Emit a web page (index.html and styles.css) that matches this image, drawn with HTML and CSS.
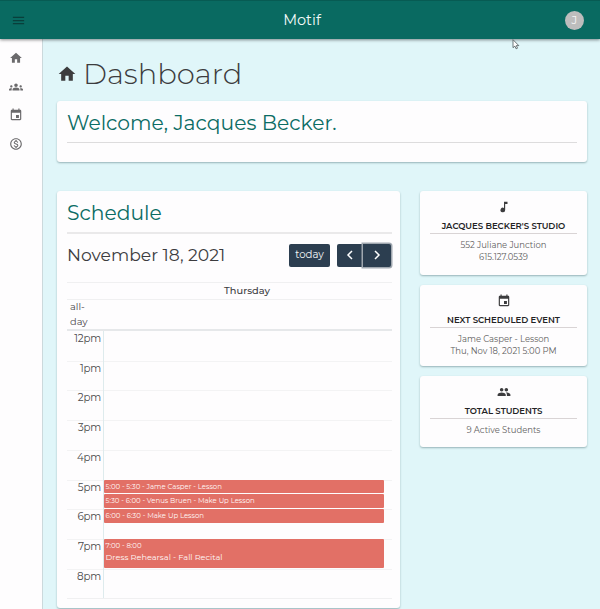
FILE: index.html
```html
<!DOCTYPE html>
<html lang="en">
<head>
<meta charset="utf-8">
<title>Motif</title>
<link rel="stylesheet" href="styles.css">
</head>
<body>
<svg class="sprites" aria-hidden="true">
  <symbol id="home" viewBox="0 0 24 24"><path d="M10 20v-6h4v6h5v-8h3L12 3 2 12h3v8z"/></symbol>
  <symbol id="groups" viewBox="0 0 24 24"><path d="M12 12.75c1.63 0 3.07.39 4.24.9 1.08.48 1.76 1.56 1.76 2.73V18H6v-1.61c0-1.18.68-2.26 1.76-2.73 1.17-.52 2.61-.91 4.24-.91zM4 13c1.1 0 2-.9 2-2s-.9-2-2-2-2 .9-2 2 .9 2 2 2zm1.13 1.1C4.76 14.04 4.39 14 4 14c-.99 0-1.93.21-2.78.58C.48 14.9 0 15.62 0 16.43V18h4.5v-1.61c0-.83.23-1.61.63-2.29zM20 13c1.1 0 2-.9 2-2s-.9-2-2-2-2 .9-2 2 .9 2 2 2zm4 3.43c0-.81-.48-1.53-1.22-1.85C21.93 14.21 20.99 14 20 14c-.39 0-.76.04-1.13.1.4.68.63 1.46.63 2.29V18H24v-1.57zM12 6c1.66 0 3 1.34 3 3s-1.34 3-3 3-3-1.34-3-3 1.34-3 3-3z"/></symbol>
  <symbol id="event" viewBox="0 0 24 24"><path d="M17 12h-5v5h5v-5zM16 1v2H8V1H6v2H5c-1.11 0-1.99.9-1.99 2L3 19c0 1.1.89 2 2 2h14c1.1 0 2-.9 2-2V5c0-1.1-.9-2-2-2h-1V1h-2zm3 18H5V8h14v11z"/></symbol>
  <symbol id="money" viewBox="0 0 24 24"><path d="M12 2C6.48 2 2 6.48 2 12s4.480 10 10 10 10-4.480 10-10S17.520 2 12 2zm0 18c-4.410 0-8-3.590-8-8s3.590-8 8-8 8 3.590 8 8-3.590 8-8 8zm.310-8.860c-1.770-.450-2.340-.940-2.340-1.670 0-.840.790-1.430 2.100-1.430 1.380 0 1.900.660 1.940 1.640h1.710c-.050-1.340-.870-2.570-2.490-2.970V5H10.900v1.690c-1.510.320-2.720 1.300-2.720 2.810 0 1.790 1.490 2.690 3.660 3.210 1.950.460 2.340 1.150 2.340 1.870 0 .530-.390 1.390-2.100 1.390-1.600 0-2.230-.720-2.320-1.640H8.040c.100 1.700 1.360 2.660 2.860 2.970V19h2.340v-1.670c1.520-.290 2.720-1.160 2.730-2.770-.010-2.200-1.900-2.960-3.660-3.420z"/></symbol>
  <symbol id="note" viewBox="0 0 24 24"><path d="M12 3v10.550A4 4 0 1 0 14 17V7h4V3h-6z"/></symbol>
  <symbol id="people" viewBox="0 0 24 24"><path d="M16 11c1.660 0 2.990-1.340 2.990-3S17.660 5 16 5s-3 1.340-3 3 1.340 3 3 3zm-8 0c1.660 0 2.990-1.340 2.990-3S9.660 5 8 5 5 6.340 5 8s1.340 3 3 3zm0 2c-2.330 0-7 1.170-7 3.500V19h14v-2.500c0-2.330-4.670-3.500-7-3.500zm8 0c-.290 0-.620.020-.970.050 1.160.840 1.970 1.970 1.970 3.450V19h6v-2.500c0-2.330-4.670-3.500-7-3.500z"/></symbol>
</svg>

<header class="topbar">
  <svg class="menu" viewBox="0 0 24 24"><path d="M3 18h18v-2H3v2zm0-5h18v-2H3v2zm0-7v2h18V6H3z"/></svg>
  <div class="brand">Motif</div>
  <div class="avatar">J</div>
</header>

<div class="shell">
  <nav class="sidebar">
    <svg><use href="#home"/></svg>
    <svg><use href="#groups"/></svg>
    <svg><use href="#event"/></svg>
    <svg><use href="#money"/></svg>
  </nav>

  <main class="content">
    <h1 class="page-title"><svg><use href="#home"/></svg>Dashboard</h1>

    <section class="card welcome">
      <h2 class="heading">Welcome, Jacques Becker.</h2>
    </section>

    <div class="columns">
      <section class="card schedule">
        <h2 class="heading">Schedule</h2>
        <div class="toolbar">
          <div class="date">November 18, 2021</div>
          <button class="btn today">today</button>
          <div class="btn-group">
            <button class="btn"><svg viewBox="0 0 10 12"><path d="M7 2 3 6l4 4"/></svg></button>
            <button class="btn focused"><svg viewBox="0 0 10 12"><path d="m3 2 4 4-4 4"/></svg></button>
          </div>
        </div>
        <div class="calendar">
          <div class="day-name">Thursday</div>
          <div class="all-day">all-<br>day</div>
          <div class="slots">
            <div class="hour h0">12pm</div>
            <div class="hour h1">1pm</div>
            <div class="hour h2">2pm</div>
            <div class="hour h3">3pm</div>
            <div class="hour h4">4pm</div>
            <div class="hour h5">5pm</div>
            <div class="hour h6">6pm</div>
            <div class="hour h7">7pm</div>
            <div class="hour h8">8pm</div>
            <div class="axis"></div>
            <div class="event e1">5:00 - 5:30 - Jame Casper - Lesson</div>
            <div class="event e2">5:30 - 6:00 - Venus Bruen - Make Up Lesson</div>
            <div class="event e3">6:00 - 6:30 - Make Up Lesson</div>
            <div class="event e4">7:00 - 8:00<div class="event-title">Dress Rehearsal - Fall Recital</div></div>
          </div>
        </div>
      </section>

      <aside class="info">
        <section class="card info-card studio">
          <svg><use href="#note"/></svg>
          <h3>JACQUES BECKER'S STUDIO</h3>
          <p>552 Juliane Junction<br>615.127.0539</p>
        </section>
        <section class="card info-card next">
          <svg><use href="#event"/></svg>
          <h3>NEXT SCHEDULED EVENT</h3>
          <p>Jame Casper - Lesson<br>Thu, Nov 18, 2021 5:00 PM</p>
        </section>
        <section class="card info-card total">
          <svg><use href="#people"/></svg>
          <h3>TOTAL STUDENTS</h3>
          <p>9 Active Students</p>
        </section>
      </aside>
    </div>
  </main>
</div>

<svg class="cursor" viewBox="0 0 8 11"><path d="M1 .7v8l1.900-1.600 1.200 2.700 1.400-.600-1.200-2.600h2.500z"/></svg>
</body>
</html>
```
FILE: styles.css
```css
* { box-sizing: border-box; }

body {
  margin: 0;
  height: 609px;
  overflow: hidden;
  background: #e0f6f9;
  color: #3c3c3e;
  font-family: Montserrat, Inter, sans-serif;
  position: relative;
}

h1, h2, h3, p { margin: 0; font-weight: 400; }
svg { display: block; fill: currentColor; }
.sprites { display: none; }

.topbar {
  position: relative;
  z-index: 2;
  height: 39px;
  padding: 0 16px 0 11px;
  display: grid;
  grid-template-columns: 1fr auto 1fr;
  align-items: center;
  background: #096a61;
  border-top: 1px solid #075b53;
  box-shadow: 0 1px 3px rgba(0, 0, 0, .45);
  color: #f4fbfa;
}
.menu { width: 15px; height: 15px; color: #093f3b; }
.brand { font-size: 14.500px; padding: 0 0 1px 9px; }
.avatar {
  justify-self: end;
  width: 19px;
  height: 19px;
  border-radius: 50%;
  background: #bdbdbd;
  color: #f6f6f6;
  font-size: 11.500px;
  line-height: 19px;
  text-align: center;
}

.shell { display: flex; height: 570px; }

.sidebar {
  width: 43px;
  flex: none;
  padding: 12px 0 0 8.500px;
  display: flex;
  flex-direction: column;
  gap: 14.700px;
  background: #fefdfe;
  border-right: 1px solid #cbd9dc;
  color: #6b6a6c;
}
.sidebar svg { width: 14px; height: 14px; }

.content { flex: 1; padding: 17px 13px 0 14px; }

.page-title {
  height: 36px;
  display: flex;
  align-items: center;
  gap: 6px;
  font-size: 29px;
  font-weight: 300;
  line-height: 36px;
}
.page-title svg { width: 20px; height: 20px; }

.card {
  background: #fefdfe;
  border-radius: 3px;
  box-shadow: 0 1px 2px rgba(40, 80, 85, .4);
}

.heading {
  color: #0b6c64;
  font-size: 20.300px;
  line-height: 26px;
  border-bottom: 1px solid #dddcdd;
}

.welcome { height: 61px; margin-top: 9px; padding: 9px 10px; }
.welcome .heading { height: 33px; }

.columns {
  display: grid;
  grid-template-columns: 343px 167px;
  gap: 20px;
  align-items: start;
  margin-top: 29px;
}

.schedule { height: 417px; padding: 9px 8px 0 10px; }
.schedule .heading { height: 34px; border-bottom: 2px solid #eae9ea; }

.toolbar { display: flex; align-items: center; height: 24px; margin-top: 9px; }
.date { flex: 1; font-size: 17.200px; padding-bottom: 1px; }
.btn {
  height: 23px;
  padding: 0;
  border: 0;
  border-radius: 2px;
  background: #2c3e50;
  color: #f6f8f9;
  font: 400 10.200px Montserrat, Inter, sans-serif;
  display: grid;
  place-items: center;
}
.today { width: 41px; padding-bottom: 1px; }
.btn-group { display: flex; margin: 0 1px 0 7px; }
.btn-group .btn { width: 26px; border-radius: 2px 0 0 2px; }
.btn-group .focused {
  width: 28px;
  border-radius: 0 2px 2px 0;
  box-shadow: 0 0 0 1.500px #a0a7af;
}
.btn svg { width: 10px; height: 12px; fill: none; stroke: #fff; stroke-width: 1.500; }

.calendar { margin-top: 15px; border-top: 1px solid #f0f0f1; color: #4b4a4c; }
.day-name {
  height: 17px;
  padding-left: 35px;
  border-bottom: 1px solid #f0f0f1;
  font-size: 9.800px;
  font-weight: 500;
  line-height: 16px;
  text-align: center;
  color: #3c3c3e;
}
.all-day {
  height: 31px;
  padding: 0 0 0 3px;
  border-bottom: 2px solid #e6e8ea;
  font-size: 9.800px;
  line-height: 14.500px;
}

.slots {
  display: grid;
  grid-template-columns: 37px 1fr 8px;
  grid-template-rows: repeat(18, 14.860px);
  border-bottom: 1px solid #f0f0f1;
}
.hour {
  grid-column: 1 / -1;
  padding-right: 291px;
  border-top: 1px solid #f3f3f4;
  font-size: 10.300px;
  line-height: 13px;
  letter-spacing: -.200px;
  text-align: right;
  white-space: nowrap;
}
.h0 { grid-row: 1 / span 2; border-top-color: transparent; }
.h1 { grid-row: 3 / span 2; }
.h2 { grid-row: 5 / span 2; }
.h3 { grid-row: 7 / span 2; }
.h4 { grid-row: 9 / span 2; }
.h5 { grid-row: 11 / span 2; }
.h6 { grid-row: 13 / span 2; }
.h7 { grid-row: 15 / span 2; }
.h8 { grid-row: 17 / span 2; }
.axis { grid-area: 1 / 1 / -1 / 2; border-right: 1px solid #deebed; }

.event {
  grid-column: 2;
  margin: 0 0 1px;
  padding-left: 1.500px;
  border-radius: 1px;
  background: #e27066;
  color: #fff8f7;
  font-size: 6.950px;
  line-height: 13px;
  white-space: nowrap;
}
.e1 { grid-row: 11; }
.e2 { grid-row: 12; }
.e3 { grid-row: 13; }
.e4 { grid-row: 15 / span 2; }
.event-title { font-size: 8.200px; line-height: 11px; }

.info { display: grid; gap: 10px; }
.info-card { padding: 9px 10px 0; text-align: center; }
.info-card svg { width: 14px; height: 14px; margin: 0 auto; }
.info-card h3 {
  height: 20px;
  padding-top: 6px;
  border-bottom: 1px solid #d9d4d5;
  color: #222224;
  font-size: 8.500px;
  font-weight: 600;
  line-height: 12px;
}
.info-card p {
  padding-top: 5px;
  color: #5f5e60;
  font-size: 8.450px;
  line-height: 12px;
}
.studio { height: 84px; }
.next { height: 81px; }
.total { height: 71px; }

.cursor {
  position: absolute;
  z-index: 3;
  left: 512px;
  top: 39px;
  width: 8px;
  height: 11px;
  fill: #fff;
  stroke: #4d5558;
  stroke-width: .800;
}
```
